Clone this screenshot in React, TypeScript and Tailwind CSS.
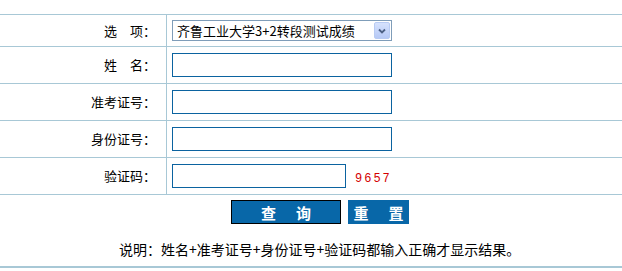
import React from "react";

const LINE = "border-[#a8c8d6]";

function Row({ label, children, first = false }: { label: string; children: React.ReactNode; first?: boolean }) {
  return (
    <div className={`flex border-b ${LINE} ${first ? "h-[32px]" : "h-[37px]"}`}>
      <div className={`w-[167px] shrink-0 border-r ${LINE} flex items-center justify-end pr-[10px] text-[13px] text-black`}>
        {label}
      </div>
      <div className="flex items-center pl-[5px]">{children}</div>
    </div>
  );
}

function TextBox({ w }: { w: string }) {
  return <div className={`${w} h-[24px] border border-[#0b63a0] bg-white`} />;
}

export default function App() {
  return (
    <div
      className="w-[622px] h-[271px] bg-white overflow-hidden pt-[14px]"
      style={{ fontFamily: '"Noto Sans CJK SC", "Liberation Sans", sans-serif' }}
    >
      <div className={`border-t ${LINE}`}>
        <Row label="选　项：" first>
          <div className="w-[220px] h-[21px] border border-[#7f9db9] bg-white flex items-center">
            <span className="flex-1 pl-[4px] text-[13px] leading-none text-black whitespace-nowrap">
              齐鲁工业大学3+2转段测试成绩
            </span>
            <div className="w-[16px] h-[17px] mr-[1px] rounded-[2px] border border-[#b8cbf3] bg-gradient-to-b from-[#d6e2fd] to-[#b6c9f6] flex items-center justify-center">
              <svg width="8" height="6" viewBox="0 0 8 6">
                <path d="M1 1.5 L4 4.5 L7 1.5" stroke="#4d6185" strokeWidth="1.8" fill="none" />
              </svg>
            </div>
          </div>
        </Row>
        <Row label="姓　名：">
          <TextBox w="w-[220px]" />
        </Row>
        <Row label="准考证号：">
          <TextBox w="w-[220px]" />
        </Row>
        <Row label="身份证号：">
          <TextBox w="w-[220px]" />
        </Row>
        <Row label="验证码：">
          <TextBox w="w-[174px]" />
          <span
            className="ml-[9px] pt-[5px] text-[12px] tracking-[2px] text-[#d40000]"
            style={{ fontFamily: '"Liberation Mono", monospace' }}
          >
            9657
          </span>
        </Row>
      </div>
      <div className="flex gap-[7px] pl-[231px] pt-[5px]">
        <div className="w-[110px] h-[24px] bg-[#0867a8] border border-black flex items-center justify-center gap-[20px] text-white text-[15px] font-bold leading-none">
          <span>查</span>
          <span>询</span>
        </div>
        <div className="w-[61px] h-[24px] bg-[#0867a8] flex items-center justify-center gap-[20px] text-white text-[15px] font-bold leading-none">
          <span>重</span>
          <span>置</span>
        </div>
      </div>
      <div className="pl-[119px] pt-[16px] h-[42px] text-[14px] leading-[18px] text-black whitespace-nowrap">
        说明：姓名+准考证号+身份证号+验证码都输入正确才显示结果。
      </div>
      <div className="h-[2px] bg-[#a8c8d6]" />
    </div>
  );
}
